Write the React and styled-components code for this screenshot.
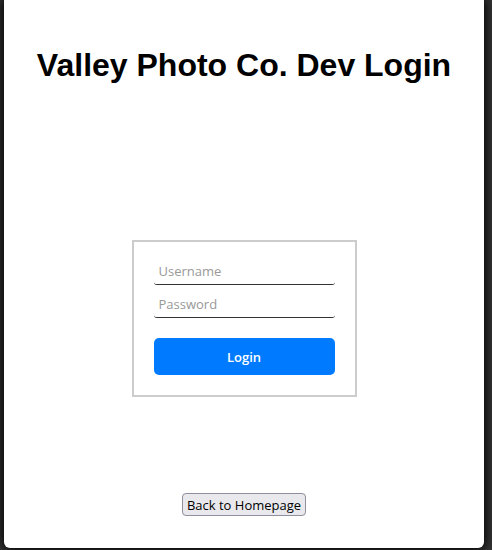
import React from "react";
import styled, { createGlobalStyle } from "styled-components";

const GlobalStyle = createGlobalStyle`
  *, *::before, *::after { box-sizing: border-box; }
  html { background: #363636; }
  body { margin: 0; font-family: "Open Sans", "Noto Sans", sans-serif; }
`;

const Backdrop = styled.div`
  display: flex;
  flex-direction: column;
  min-height: 100vh;
  padding: 0 8px 2px 4px;
  overflow: hidden;
  background: #363636;
`;

const Page = styled.main`
  flex: 1;
  display: flex;
  flex-direction: column;
  align-items: center;
  padding: 47px 16px 32px;
  background: #fff;
  border-radius: 0 0 6px 6px;
  box-shadow: 0 0 12px 2px #000;
`;

const Title = styled.h1`
  margin: 0;
  font-family: "Liberation Sans", Arial, sans-serif;
  font-size: 32px;
  line-height: 36px;
  font-weight: 700;
  text-align: center;
  color: #000;
`;

const LoginForm = styled.form`
  display: flex;
  flex-direction: column;
  gap: 10px;
  width: 225px;
  margin: 157px 0 96px;
  padding: 20px;
  border: 2px solid #ccc;
`;

const Field = styled.input`
  width: 100%;
  height: 23px;
  padding: 0 5px 4px;
  border: 0;
  border-bottom: 1px solid #333;
  border-radius: 3px;
  background: #fff;
  color: #000;
  font-family: inherit;
  font-size: 13px;
  line-height: 18px;
  outline: none;

  &::placeholder { color: #999; opacity: 1; }
  &:focus { border-bottom-color: #007bff; }
`;

const LoginButton = styled.button`
  height: 37px;
  margin: 10px 0 0;
  padding: 0 20px;
  border: 0;
  border-radius: 5px;
  background: #007bff;
  color: #fff;
  font-family: inherit;
  font-size: 13px;
  font-weight: 600;
  cursor: pointer;
`;

const BackButton = styled.button`
  height: 23px;
  padding: 0 4px;
  border: 1px solid #8f8f9d;
  border-radius: 4px;
  background: #e9e9ed;
  color: #000;
  font-family: inherit;
  font-size: 13px;
  line-height: 18px;
  cursor: pointer;
`;

export default function App() {
  return (
    <>
      <GlobalStyle />
      <Backdrop>
        <Page>
          <Title>Valley Photo Co. Dev Login</Title>
          <LoginForm onSubmit={(event) => event.preventDefault()}>
            <Field type="text" name="username" placeholder="Username" aria-label="Username" />
            <Field type="password" name="password" placeholder="Password" aria-label="Password" />
            <LoginButton type="submit">Login</LoginButton>
          </LoginForm>
          <BackButton type="button">Back to Homepage</BackButton>
        </Page>
      </Backdrop>
    </>
  );
}
